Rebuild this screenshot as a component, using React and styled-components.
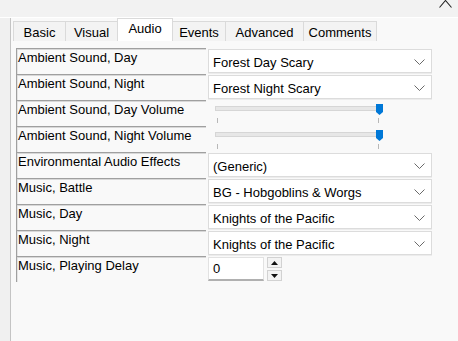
import React from "react";
import styled, { createGlobalStyle } from "styled-components";

const GlobalStyle = createGlobalStyle`
  html, body {
    margin: 0;
    padding: 0;
    background: #f9f9f9;
  }
  body {
    font-family: "Liberation Sans", Arial, sans-serif;
    font-size: 13px;
    color: #000;
  }
`;

const tabs = [
  { name: "Basic", w: 53 },
  { name: "Visual", w: 53 },
  { name: "Audio", w: 56 },
  { name: "Events", w: 54 },
  { name: "Advanced", w: 79 },
  { name: "Comments", w: 74 },
];

const rows = [
  { label: "Ambient Sound, Day", kind: "combo", value: "Forest Day Scary" },
  { label: "Ambient Sound, Night", kind: "combo", value: "Forest Night Scary" },
  { label: "Ambient Sound, Day Volume", kind: "slider", value: 100 },
  { label: "Ambient Sound, Night Volume", kind: "slider", value: 100 },
  { label: "Environmental Audio Effects", kind: "combo", value: "(Generic)" },
  { label: "Music, Battle", kind: "combo", value: "BG - Hobgoblins & Worgs" },
  { label: "Music, Day", kind: "combo", value: "Knights of the Pacific" },
  { label: "Music, Night", kind: "combo", value: "Knights of the Pacific" },
  { label: "Music, Playing Delay", kind: "spin", value: "0" },
];

const Window = styled.div`
  width: 458px;
  height: 341px;
  overflow: hidden;
  display: flex;
  flex-direction: column;
  background: #f9f9f9;
`;

const TopBar = styled.div`
  height: 17px;
  flex-shrink: 0;
  background: #f2f2f2;
  border-bottom: 1px solid #ffffff;
  display: flex;
  justify-content: flex-end;
  padding-right: 6px;
`;

const CloseMark = styled.svg`
  display: block;
`;

const Body = styled.div`
  flex: 1;
  display: flex;
`;

const Gutter = styled.div`
  width: 10px;
  flex-shrink: 0;
  background: #f0f0f0;
  border-right: 1px solid #c4c4c4;
`;

const Panel = styled.div`
  flex: 1;
  display: flex;
  flex-direction: column;
  padding-left: 2px;
`;

const TabStrip = styled.div`
  height: 23px;
  display: flex;
  align-items: flex-end;
`;

const Tab = styled.div`
  width: ${(p) => p.$w}px;
  height: ${(p) => (p.$active ? "23px" : "20px")};
  box-sizing: border-box;
  padding-bottom: ${(p) => (p.$active ? "3px" : "0")};
  padding-top: ${(p) => (p.$active ? "0" : "1px")};
  display: flex;
  align-items: center;
  justify-content: center;
  background: ${(p) => (p.$active ? "#ffffff" : "#f3f3f3")};
  border: 1px solid #dadada;
  border-bottom: none;
  margin-left: -1px;
  position: relative;
  z-index: ${(p) => (p.$active ? 1 : 0)};
  &:first-child {
    margin-left: 0;
  }
`;

const Grid = styled.div`
  margin-top: 7px;
  margin-left: 3px;
  display: grid;
  grid-template-columns: 190px 226px;
  grid-auto-rows: 26px;
  column-gap: 2px;
`;

const LabelCell = styled.div`
  box-sizing: border-box;
  border-top: 1px solid #a0a0a0;
  border-left: 1px solid #a0a0a0;
  box-shadow: inset 0 1px 0 #d8d8d8, inset 1px 0 0 #e4e4e4;
  padding: 1px 0 0 1px;
  line-height: 15px;
  white-space: nowrap;
  overflow: hidden;
`;

const ValueCell = styled.div`
  padding-top: 1px;
  box-sizing: border-box;
`;

const Combo = styled.div`
  width: 224px;
  height: 24px;
  box-sizing: border-box;
  background: #ffffff;
  border: 1px solid #dcdcdc;
  box-shadow: 0 1px 0 #ececec;
  display: flex;
  align-items: center;
  justify-content: space-between;
  padding: 2px 6px 0 4px;
  white-space: nowrap;
`;

const Chevron = () => (
  <svg width="11" height="6" viewBox="0 0 11 6">
    <path d="M0.5 0.5 L5.5 5.5 L10.5 0.5" fill="none" stroke="#6a6a6a" strokeWidth="1" />
  </svg>
);

const SliderBox = styled.div`
  position: relative;
  width: 170px;
  height: 25px;
  margin-left: 7px;
`;

const Track = styled.div`
  position: absolute;
  left: 0;
  top: 5px;
  width: 165px;
  height: 5px;
  box-sizing: border-box;
  background: #e7e7e7;
  border: 1px solid #d6d6d6;
`;

const Thumb = styled.svg`
  position: absolute;
  top: 3px;
  display: block;
`;

const Tick = styled.div`
  position: absolute;
  top: 17px;
  width: 1px;
  height: 5px;
  background: #b8b8b8;
`;

const Slider = ({ value }) => {
  const x = Math.round((value / 100) * 161);
  return (
    <SliderBox>
      <Track />
      <Tick style={{ left: 2 }} />
      <Tick style={{ left: 163 }} />
      <Thumb width="7" height="11" viewBox="0 0 7 11" style={{ left: x }}>
        <path d="M0 0 H7 V8 L3.5 11 L0 8 Z" fill="#0078d7" />
      </Thumb>
    </SliderBox>
  );
};

const SpinRow = styled.div`
  display: flex;
  align-items: flex-start;
  gap: 3px;
`;

const SpinInput = styled.div`
  width: 56px;
  height: 24px;
  box-sizing: border-box;
  background: #ffffff;
  border: 1px solid #e2e2e2;
  border-bottom: 2px solid #b0b0b0;
  padding: 3px 0 0 4px;
  line-height: 15px;
`;

const SpinButtons = styled.div`
  display: flex;
  flex-direction: column;
  gap: 2px;
`;

const SpinButton = styled.div`
  width: 15px;
  height: 11px;
  box-sizing: border-box;
  background: #f3f3f3;
  border: 1px solid #d2d2d2;
  display: flex;
  align-items: center;
  justify-content: center;
`;

const Arrow = ({ up }) => (
  <svg width="7" height="4" viewBox="0 0 7 4">
    <path d={up ? "M0 4 L3.5 0 L7 4 Z" : "M0 0 L7 0 L3.5 4 Z"} fill="#111" />
  </svg>
);

const Value = ({ row }) => {
  if (row.kind === "combo") {
    return (
      <Combo>
        <span>{row.value}</span>
        <Chevron />
      </Combo>
    );
  }
  if (row.kind === "slider") return <Slider value={row.value} />;
  return (
    <SpinRow>
      <SpinInput>{row.value}</SpinInput>
      <SpinButtons>
        <SpinButton>
          <Arrow up />
        </SpinButton>
        <SpinButton>
          <Arrow />
        </SpinButton>
      </SpinButtons>
    </SpinRow>
  );
};

export default function App() {
  return (
    <>
      <GlobalStyle />
      <Window>
        <TopBar>
          <CloseMark width="13" height="8" viewBox="0 0 13 8">
            <path d="M0.5 7.5 L6.5 0.5 L12.5 7.5" fill="none" stroke="#222" strokeWidth="1.1" />
          </CloseMark>
        </TopBar>
        <Body>
          <Gutter />
          <Panel>
            <TabStrip>
              {tabs.map((t) => (
                <Tab key={t.name} $w={t.w} $active={t.name === "Audio"}>
                  {t.name}
                </Tab>
              ))}
            </TabStrip>
            <Grid>
              {rows.map((r) => (
                <React.Fragment key={r.label}>
                  <LabelCell>{r.label}</LabelCell>
                  <ValueCell>
                    <Value row={r} />
                  </ValueCell>
                </React.Fragment>
              ))}
            </Grid>
          </Panel>
        </Body>
      </Window>
    </>
  );
}
